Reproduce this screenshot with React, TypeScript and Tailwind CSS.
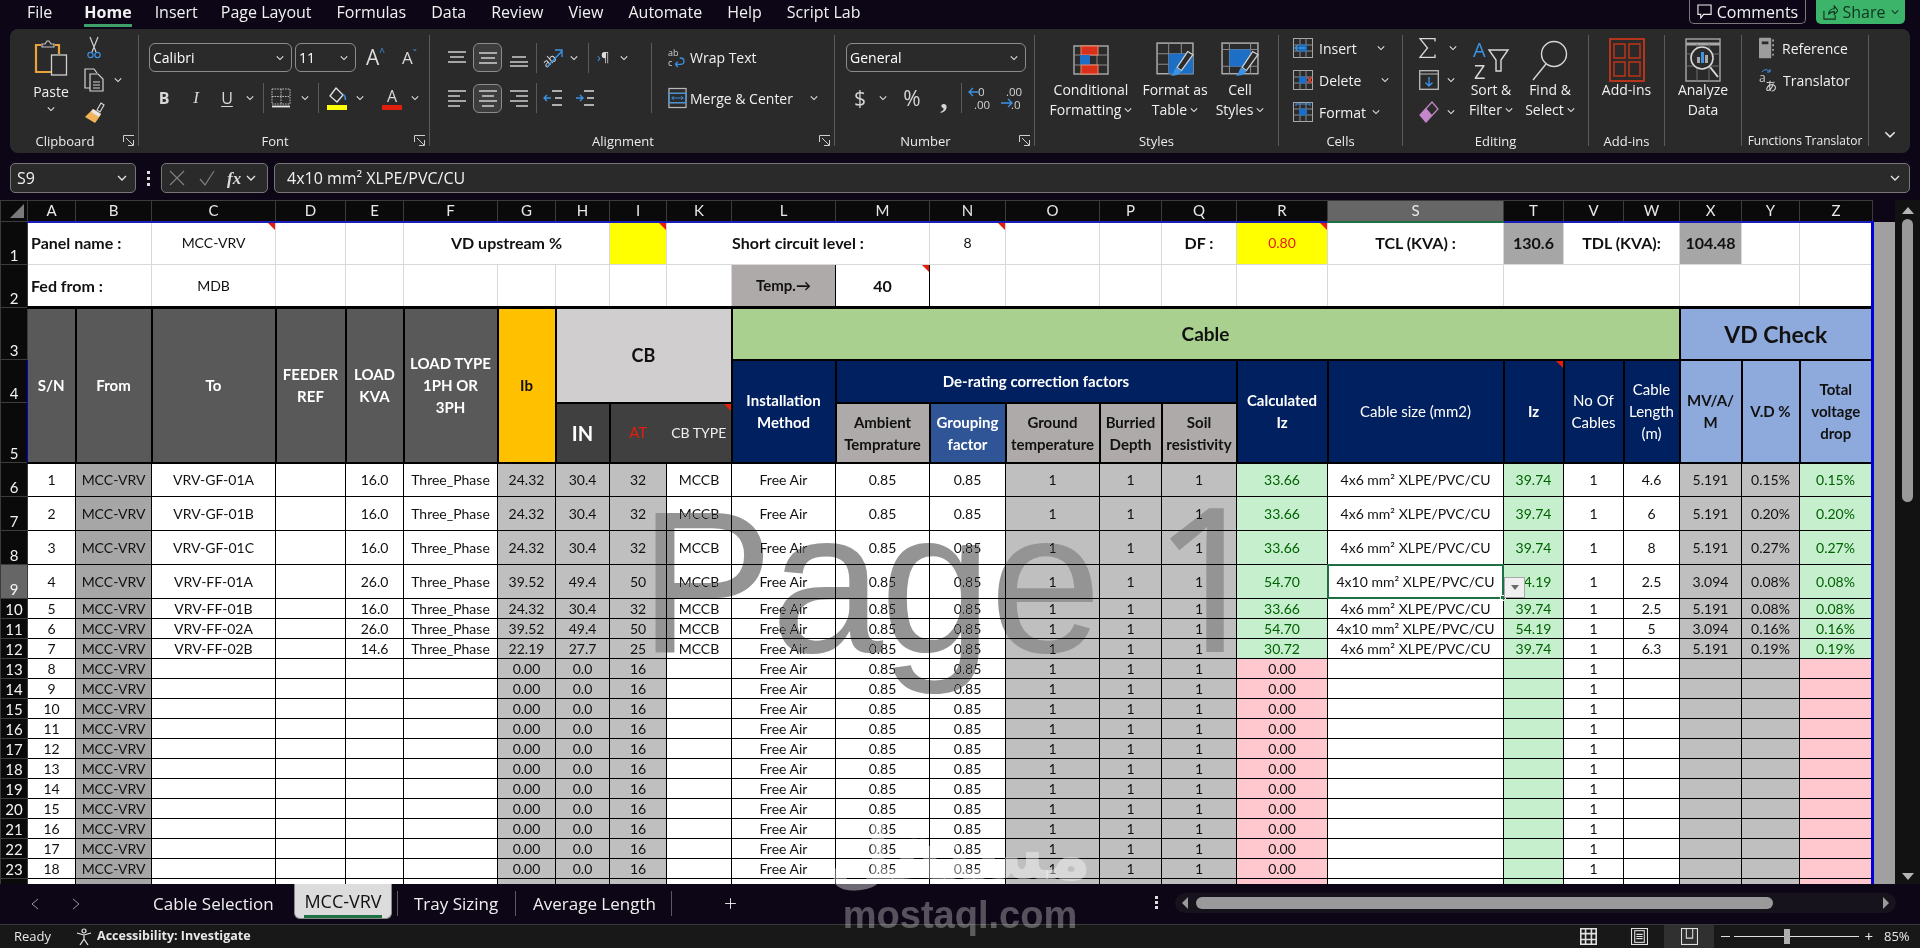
import type { ReactNode } from "react";
import { Plus } from "lucide-react";

const GRID = "font-['Lato','Liberation_Sans',sans-serif]";

const Chev = ({ className = "" }: { className?: string }) => (
  <svg viewBox="0 0 10 6" className={`h-[6px] w-[10px] shrink-0 ${className}`} fill="none" stroke="#e6e6e6" strokeWidth="1.3">
    <path d="M1 1l4 4 4-4" />
  </svg>
);

const Sep = ({ className = "" }: { className?: string }) => <span className={`h-[30px] w-px shrink-0 bg-[#5a5a5a] ${className}`} />;

const Launcher = () => (
  <svg viewBox="0 0 12 12" className="absolute bottom-[-1px] right-[3px] h-[12px] w-[12px]" fill="none" stroke="#cfcfcf">
    <path d="M.5 7V.5H11M3 3l7 7M5 10.5h5.5V5" />
  </svg>
);

function Group({ className, label, labelClass = "text-[13px]", launcher, children }: { className: string; label: string; labelClass?: string; launcher?: boolean; children: ReactNode }) {
  return (
    <div className={`relative flex h-[111px] shrink-0 flex-col border-r border-[#5a5a5a] ${className}`}>
      <div className="h-[95px] shrink-0">{children}</div>
      <div className={`h-[22px] shrink-0 whitespace-nowrap text-center leading-[22px] text-[#ececec] ${labelClass} ${launcher ? "pr-[18px]" : ""}`}>{label}</div>
      {launcher && <Launcher />}
    </div>
  );
}

function Select({ className, text }: { className: string; text: string }) {
  return (
    <div className={`flex h-[29px] shrink-0 items-center justify-between rounded-[6px] border border-[#8c8c8c] pl-[3px] pr-[7px] ${className}`}>
      <span className="text-[14px] text-white">{text}</span>
      <Chev className="!w-[8px]" />
    </div>
  );
}

const Lines = ({ rows, active = false }: { rows: [number, number, number][]; active?: boolean }) => (
  <span className={`flex h-[29px] w-[29px] items-center justify-center rounded-[6px] ${active ? "border border-[#8c8c8c] bg-[#3d3d3d]" : ""}`}>
    <svg viewBox="0 0 20 20" className="h-[20px] w-[20px]" stroke="#dcdcdc" strokeWidth="1.4">
      {rows.map(([a, b, y]) => (
        <path key={y} d={`M${a} ${y}H${b}`} />
      ))}
    </svg>
  </span>
);

const Big = ({ icon, lines, className }: { icon: ReactNode; lines: ReactNode[]; className: string }) => (
  <div className={`flex shrink-0 flex-col items-center pt-[4px] text-[14px] leading-[20px] text-[#f0f0f0] ${className}`}>
    <div className="flex h-[41px] items-center">{icon}</div>
    {lines.map((l, i) => (
      <div key={i} className="flex items-center gap-[3px] whitespace-nowrap">
        {l}
      </div>
    ))}
  </div>
);

const PasteIcon = () => (
  <svg viewBox="0 0 34 36" className="h-[36px] w-[34px]" fill="none">
    <path d="M7 5H2v27h15" stroke="#e8a33d" strokeWidth="2.2" />
    <path d="M21 5h4v9" stroke="#e8a33d" strokeWidth="2.2" />
    <path d="M8 7V4h3l2-3h2l2 3h3v3z" stroke="#c4c4c4" strokeWidth="1.2" />
    <rect x="17.5" y="15" width="15" height="20" fill="#2b2b2b" stroke="#d0d0d0" strokeWidth="1.3" />
  </svg>
);

const Scissor = () => (
  <svg viewBox="0 0 16 24" className="h-[24px] w-[16px]" fill="none" strokeWidth="1.2">
    <path d="M4 1l6 15M12 1L6 16" stroke="#d0d0d0" />
    <circle cx="4.5" cy="19" r="2.6" stroke="#3c92e4" />
    <circle cx="11.5" cy="19" r="2.6" stroke="#3c92e4" />
  </svg>
);

const CopyIcon = () => (
  <svg viewBox="0 0 20 24" className="h-[24px] w-[20px]" fill="none" stroke="#d4d4d4" strokeWidth="1.2">
    <path d="M6 20H1V1h9l3 4" />
    <path d="M6 6h8l5 5v12H6z" fill="#2b2b2b" />
    <path d="M9 14h7M9 17h7M9 20h7" />
  </svg>
);

const Painter = () => (
  <svg viewBox="0 0 22 24" className="h-[24px] w-[22px]" fill="none">
    <path d="M14 10l4-7 3 2-4 7z" stroke="#d4d4d4" strokeWidth="1.2" />
    <path d="M10 9l8 5-3 5-3 4-10-6 3-3z" fill="#f0b35a" />
    <path d="M10 9l8 5-2 3-8-5z" fill="#e6e6e6" />
  </svg>
);

const BordersIcon = () => (
  <svg viewBox="0 0 20 20" className="h-[22px] w-[20px]" fill="none" stroke="#bdbdbd" strokeDasharray="1.6 1">
    <path d="M1 1h18v15H1zM10 1v15M1 8.5h18" />
    <path d="M1 18.5h18" stroke="#e6e6e6" strokeWidth="1.8" strokeDasharray="none" />
  </svg>
);

const FillIcon = () => (
  <span className="flex flex-col items-center">
    <svg viewBox="0 0 20 18" className="h-[18px] w-[20px]" fill="none">
      <path d="M9 1l7 7-6 7-7-6z" stroke="#e4e4e4" strokeWidth="1.3" />
      <path d="M16 7c2 2 3 4 2 6" stroke="#3c92e4" strokeWidth="1.6" />
    </svg>
    <span className="h-[5px] w-[20px] bg-[#ffff00]" />
  </span>
);

const OrientIcon = () => (
  <svg viewBox="0 0 22 24" className="h-[24px] w-[22px]" fill="none">
    <text x="-2" y="17" fontSize="12" fill="#dcdcdc" fontFamily="Open Sans" transform="rotate(-40 8 12)">ab</text>
    <path d="M4 21L19 5M12 4h7v7" stroke="#3c92e4" strokeWidth="1.4" />
  </svg>
);

const IndentIcon = ({ flip = false }: { flip?: boolean }) => (
  <svg viewBox="0 0 20 18" className="h-[18px] w-[20px]" fill="none" strokeWidth="1.4">
    <path d="M9 2h10M9 16h10M12 9h7" stroke="#dcdcdc" />
    {flip ? <path d="M1 9h7M5 6l3 3-3 3" stroke="#3c92e4" /> : <path d="M8 9H1M4 6L1 9l3 3" stroke="#3c92e4" />}
  </svg>
);

const WrapIcon = () => (
  <svg viewBox="0 0 20 24" className="h-[24px] w-[18px]" fill="none">
    <text x="0" y="10" fontSize="10" fill="#cfcfcf" fontFamily="Open Sans">ab</text>
    <text x="0" y="21" fontSize="10" fill="#cfcfcf" fontFamily="Open Sans">c</text>
    <path d="M8 19h6c5 0 5-7 0-7h-1M8 19l3-3M8 19l3 3" stroke="#3c92e4" strokeWidth="1.4" />
  </svg>
);

const MergeIcon = () => (
  <svg viewBox="0 0 20 22" className="h-[22px] w-[19px]" fill="none">
    <rect x="1" y="1" width="18" height="20" fill="#2b2b2b" stroke="#b8b8b8" strokeWidth="1.3" />
    <path d="M1 6h18M1 16h18" stroke="#b8b8b8" />
    <rect x="1.5" y="6" width="17" height="10" stroke="#3c92e4" strokeWidth="1.2" />
    <path d="M4 11h12M6 9l-2 2 2 2M14 9l2 2-2 2" stroke="#3c92e4" />
  </svg>
);

const Decimals = ({ top, bottom, right }: { top: string; bottom: string; right?: boolean }) => (
  <svg viewBox="0 0 24 26" className="h-[26px] w-[24px]" fill="none">
    <text x={right ? 6 : 10} y="11" fontSize="11.5" fill="#d4d4d4" fontFamily="Open Sans">{top}</text>
    <text x={right ? 11 : 6} y="24" fontSize="11.5" fill="#d4d4d4" fontFamily="Open Sans">{bottom}</text>
    {right ? <path d="M1 18h11M8 14l4 4-4 4" stroke="#3c92e4" strokeWidth="1.3" /> : <path d="M11 7H1M5 3L1 7l4 4" stroke="#3c92e4" strokeWidth="1.3" />}
  </svg>
);

const GridBase = ({ children }: { children: ReactNode }) => (
  <svg viewBox="0 0 36 30" className="h-[30px] w-[36px]" fill="none">
    <rect x="1" y="1" width="34" height="28" fill="#2b2b2b" stroke="#adadad" strokeWidth="1.4" />
    <path d="M1 10h34M1 20h34M12 1v28M24 1v28" stroke="#8a8a8a" />
    {children}
  </svg>
);

const CondIcon = () => (
  <GridBase>
    <rect x="8" y="1" width="17" height="9" fill="#d8311b" stroke="#f08a6a" />
    <rect x="7" y="10" width="10" height="10" fill="#1c6fc4" />
    <rect x="8" y="20" width="17" height="9" fill="#d8311b" stroke="#f08a6a" />
  </GridBase>
);

const Brush = () => (
  <g>
    <path d="M30 9l5 3-11 15-4-3z" fill="#2b2b2b" stroke="#d0d0d0" strokeWidth="1.2" />
    <path d="M19 24l5 3c-1 4-5 5-10 5 3-2 3-6 5-8z" fill="#3c92e4" />
  </g>
);

const TableIcon = () => (
  <svg viewBox="0 0 36 34" className="h-[36px] w-[38px]" fill="none">
    <rect x="1" y="1" width="34" height="29" fill="#2b2b2b" stroke="#adadad" strokeWidth="1.4" />
    <path d="M1 11h34M1 21h34M12 1v29M24 1v29" stroke="#8a8a8a" />
    <rect x="12" y="11" width="23" height="19" fill="#1c6fc4" />
    <Brush />
  </svg>
);

const CellStyleIcon = () => (
  <svg viewBox="0 0 36 34" className="h-[36px] w-[38px]" fill="none">
    <rect x="1" y="1" width="34" height="29" fill="#2b2b2b" stroke="#adadad" strokeWidth="1.4" />
    <path d="M1 7h34M1 23h34M8 1v29M28 1v29" stroke="#8a8a8a" />
    <rect x="8" y="7" width="20" height="16" fill="#1c6fc4" />
    <Brush />
  </svg>
);

const CellIcon = ({ kind }: { kind: "insert" | "delete" | "format" }) => (
  <svg viewBox="0 0 20 20" className="h-[20px] w-[20px]" fill="none">
    <rect x=".5" y=".5" width="19" height="19" stroke="#a8a8a8" />
    <path d="M.5 7h19M.5 13h19M7 .5v19M13 .5v19" stroke="#8a8a8a" />
    <rect x="6" y="6.5" width="8" height="7" fill="#1c6fc4" />
    {kind === "insert" && <path d="M12 10H2M5 7l-3 3 3 3" stroke="#3c92e4" strokeWidth="1.3" />}
    {kind === "delete" && <path d="M14 7l5 6M19 7l-5 6" stroke="#e8452c" strokeWidth="1.4" />}
    {kind === "format" && <path d="M3 2h14M3 0v4M17 0v4" stroke="#3c92e4" />}
  </svg>
);

const SortIcon = () => (
  <svg viewBox="0 0 38 42" className="h-[42px] w-[38px]" fill="none">
    <text x="1" y="18" fontSize="20" fill="#3c92e4" fontFamily="Open Sans">A</text>
    <text x="2" y="40" fontSize="20" fill="#d8d8d8" fontFamily="Open Sans">Z</text>
    <path d="M17 11h19l-7 10v11h-5V21z" stroke="#d8d8d8" strokeWidth="1.4" />
  </svg>
);

const FindIcon = () => (
  <svg viewBox="0 0 38 42" className="h-[42px] w-[38px]" fill="none" stroke="#d8d8d8" strokeWidth="1.4">
    <circle cx="23" cy="15" r="12.5" />
    <path d="M15 25L2 41" />
  </svg>
);

const AddinIcon = () => (
  <svg viewBox="0 0 36 44" className="h-[44px] w-[36px]" fill="none" stroke="#b5341a" strokeWidth="1.6">
    <rect x="1" y="1" width="34" height="42" strokeWidth="2" />
    <rect x="5" y="6" width="11" height="14" />
    <rect x="20" y="6" width="11" height="14" />
    <rect x="5" y="24" width="11" height="14" />
    <rect x="20" y="24" width="11" height="14" />
  </svg>
);

const AnalyzeIcon = () => (
  <svg viewBox="0 0 36 44" className="h-[44px] w-[36px]" fill="none">
    <rect x="1" y="1" width="34" height="42" stroke="#a8a8a8" strokeWidth="1.4" />
    <path d="M1 6h34" stroke="#a8a8a8" strokeWidth="3" />
    <path d="M1 16h34M1 28h34M12 6v37M24 6v37" stroke="#6d6d6d" />
    <circle cx="17" cy="20" r="11" fill="#2b2b2b" stroke="#d8d8d8" strokeWidth="1.6" />
    <path d="M25 29l8 10" stroke="#d8d8d8" strokeWidth="2" />
    <rect x="12" y="19" width="3" height="6" fill="#a8a8a8" />
    <rect x="16" y="14" width="3" height="11" fill="#3c92e4" />
    <rect x="20" y="17" width="3" height="8" fill="#a8a8a8" />
  </svg>
);

const SigmaIcon = () => (
  <svg viewBox="0 0 18 22" className="h-[22px] w-[17px]" fill="none" stroke="#d8d8d8" strokeWidth="1.4">
    <path d="M17 4V1H1l8 10-8 10h16v-3" />
  </svg>
);

const FillDown = () => (
  <svg viewBox="0 0 20 20" className="h-[20px] w-[20px]" fill="none">
    <rect x=".7" y=".7" width="18.6" height="18.6" stroke="#bdbdbd" strokeWidth="1.3" />
    <path d="M.7 4h18.6" stroke="#bdbdbd" />
    <path d="M10 7v9M6.500 12.500L10 16l3.500-3.500" stroke="#3c92e4" strokeWidth="1.4" />
  </svg>
);

const Eraser = () => (
  <svg viewBox="0 0 20 22" className="h-[22px] w-[20px]" fill="none">
    <path d="M13 1l6 7-12 13-6-7z" fill="#2b2b2b" stroke="#c487c9" strokeWidth="1.2" />
    <path d="M7 7l6 7-6 7-6-7z" fill="#c487c9" />
  </svg>
);

const BookIcon = () => (
  <svg viewBox="0 0 16 22" className="h-[22px] w-[15px]" fill="#9d9d9d">
    <rect x="0" y="0" width="13" height="22" rx="1" />
    <rect x="3" y="4" width="7" height="3" fill="#2b2b2b" />
    <path d="M14 2h2v2h-2zM14 7h2v2h-2zM14 12h2v2h-2zM14 17h2v2h-2z" />
  </svg>
);

const TranslateIcon = () => (
  <svg viewBox="0 0 20 24" className="h-[24px] w-[20px]" fill="none">
    <text x="0" y="14" fontSize="12" fill="#cfcfcf" fontFamily="Open Sans">a</text>
    <text x="6" y="23" fontSize="12" fill="#e2e2e2" fontFamily="'Noto Sans CJK JP'">あ</text>
    <path d="M3 4c2-3 6-3 8 0M11 1v3H8" stroke="#3c92e4" />
  </svg>
);

const Tri = () => <span className="absolute right-0 top-0 h-0 w-0 border-l-[7px] border-t-[7px] border-l-transparent border-t-[#e81c0c]" />;

const cell = "relative overflow-hidden whitespace-nowrap border border-black p-0 text-center align-middle";
const thin = `${cell} text-[14px] leading-none text-[#111]`;
const grid = "relative whitespace-nowrap border border-[#d9d9d9] p-0 text-center align-middle text-[14px] leading-none text-[#111]";
const head = `${cell} text-[15px] font-bold leading-[22px]`;
const RIGHT = "!border-r-[3px] !border-r-[#0000d8]";
const LEFT = "!border-l !border-l-[#0000d8]";
const TOP = "!border-t-2 !border-t-[#1c1cb8]";

const columns = ["A", "B", "C", "D", "E", "F", "G", "H", "I", "K", "L", "M", "N", "O", "P", "Q", "R", "S", "T", "V", "W", "X", "Y", "Z"];
const widths = [48, 76, 124, 70, 58, 94, 58, 54, 57, 65, 104, 94, 76, 94, 62, 75, 91, 176, 60, 60, 56, 62, 58, 73];

const filled: [string, string, string, string, string, string, string, string, string, string, string, string][] = [
  ["1", "VRV-GF-01A", "16.0", "24.32", "30.4", "32", "33.66", "4x6 mm² XLPE/PVC/CU", "39.74", "4.6", "5.191", "0.15%"],
  ["2", "VRV-GF-01B", "16.0", "24.32", "30.4", "32", "33.66", "4x6 mm² XLPE/PVC/CU", "39.74", "6", "5.191", "0.20%"],
  ["3", "VRV-GF-01C", "16.0", "24.32", "30.4", "32", "33.66", "4x6 mm² XLPE/PVC/CU", "39.74", "8", "5.191", "0.27%"],
  ["4", "VRV-FF-01A", "26.0", "39.52", "49.4", "50", "54.70", "4x10 mm² XLPE/PVC/CU", "54.19", "2.5", "3.094", "0.08%"],
  ["5", "VRV-FF-01B", "16.0", "24.32", "30.4", "32", "33.66", "4x6 mm² XLPE/PVC/CU", "39.74", "2.5", "5.191", "0.08%"],
  ["6", "VRV-FF-02A", "26.0", "39.52", "49.4", "50", "54.70", "4x10 mm² XLPE/PVC/CU", "54.19", "5", "3.094", "0.16%"],
  ["7", "VRV-FF-02B", "14.6", "22.19", "27.7", "25", "30.72", "4x6 mm² XLPE/PVC/CU", "39.74", "6.3", "5.191", "0.19%"],
];

const rowHeader = "border border-[#3c3c3c] bg-[#0a0a0a] p-0 text-center text-[15px] leading-[18px] text-[#f2f2f2]";

function DataRow({ n, index }: { n: number; index: number }) {
  const d = filled[index];
  const gray = "bg-[#bfbfbf]";
  const ok = "bg-[#c6efce] text-[#006100]";
  const bad = "bg-[#ffc7ce] text-[#9c0006]";
  const tall = n <= 9;
  return (
    <tr className={tall ? "h-[34px]" : "h-[20px]"}>
      <td className={`${rowHeader} ${tall ? "align-bottom" : "align-middle"} ${n === 9 ? "!bg-[#666666]" : ""}`}>{n}</td>
      <td className={`${thin} ${LEFT} bg-white`}>{d ? d[0] : index + 1}</td>
      <td className={`${thin} bg-[#a6a6a6]`}>MCC-VRV</td>
      <td className={`${thin} bg-white`}>{d?.[1]}</td>
      <td className={`${thin} bg-white`} />
      <td className={`${thin} bg-white`}>{d?.[2]}</td>
      <td className={`${thin} bg-white`}>{d ? "Three_Phase" : ""}</td>
      <td className={`${thin} ${gray}`}>{d ? d[3] : "0.00"}</td>
      <td className={`${thin} ${gray}`}>{d ? d[4] : "0.0"}</td>
      <td className={`${thin} ${gray}`}>{d ? d[5] : "16"}</td>
      <td className={`${thin} bg-white`}>{d ? "MCCB" : ""}</td>
      <td className={`${thin} bg-white`}>Free Air</td>
      <td className={`${thin} bg-white`}>0.85</td>
      <td className={`${thin} bg-white`}>0.85</td>
      <td className={`${thin} ${gray}`}>1</td>
      <td className={`${thin} ${gray}`}>1</td>
      <td className={`${thin} ${gray}`}>1</td>
      <td className={`${thin} ${d ? ok : bad}`}>{d ? d[6] : "0.00"}</td>
      {n === 9 ? (
        <td className={`${thin} !overflow-visible bg-white`}>
          {d?.[7]}
          <span className="absolute inset-[-1px] border-2 border-[#1f6f45]" />
          <span className="absolute bottom-[-3px] right-[-3px] h-[6px] w-[6px] border border-white bg-[#1f6f45]" />
          <span className="absolute right-[-22px] top-[12px] z-10 flex h-[21px] w-[21px] items-center justify-center border border-[#a8a8a8] bg-[#f0f0f0]">
            <span className="h-0 w-0 border-x-[4px] border-t-[5px] border-x-transparent border-t-[#6a6a6a]" />
          </span>
        </td>
      ) : (
        <td className={`${thin} bg-white`}>{d?.[7]}</td>
      )}
      <td className={`${thin} ${ok}`}>{d?.[8]}</td>
      <td className={`${thin} bg-white`}>1</td>
      <td className={`${thin} bg-white`}>{d?.[9]}</td>
      <td className={`${thin} ${gray}`}>{d?.[10]}</td>
      <td className={`${thin} ${gray}`}>{d?.[11]}</td>
      <td className={`${thin} ${RIGHT} ${d ? ok : bad}`}>{d?.[11]}</td>
    </tr>
  );
}

function Sheet() {
  const bold = "!text-[16px] font-bold";
  return (
    <table className={`${GRID} table-fixed border-collapse`}>
      <colgroup>
        <col className="w-[27px]" />
        {widths.map((w, i) => (
          <col key={i} style={{ width: w }} />
        ))}
      </colgroup>
      <tbody>
        <tr className="h-[21px]">
          <td className="relative border border-[#3c3c3c] bg-[#0a0a0a] p-0">
            <span className="absolute bottom-[3px] right-[3px] h-0 w-0 border-b-[14px] border-l-[14px] border-b-[#7a7a7a] border-l-transparent" />
          </td>
          {columns.map((c) => (
            <td key={c} className={`border border-[#3c3c3c] p-0 text-center text-[15px] leading-none text-[#e8e8e8] ${c === "S" ? "border-b-2 border-b-[#1f6f45] bg-[#666666]" : "bg-[#0a0a0a]"}`}>
              {c}
            </td>
          ))}
        </tr>

        <tr className="h-[43px]">
          <td className={`${rowHeader} align-bottom`}>1</td>
          <td colSpan={2} className={`${grid} ${TOP} ${LEFT} bg-white pl-[3px] !text-left ${bold}`}>Panel name :</td>
          <td className={`${grid} ${TOP} bg-white`}>MCC-VRV<Tri /></td>
          <td className={`${grid} ${TOP} bg-white`} />
          <td className={`${grid} ${TOP} bg-white`} />
          <td colSpan={3} className={`${grid} ${TOP} bg-white ${bold}`}>VD upstream %</td>
          <td className={`${grid} ${TOP} bg-[#ffff00]`}><Tri /></td>
          <td className={`${grid} ${TOP} border-r-white bg-white`} />
          <td colSpan={2} className={`${grid} ${TOP} bg-white !text-left ${bold}`}>Short circuit level :</td>
          <td className={`${grid} ${TOP} bg-white`}>8<Tri /></td>
          <td className={`${grid} ${TOP} bg-white`} />
          <td className={`${grid} ${TOP} bg-white`} />
          <td className={`${grid} ${TOP} bg-white ${bold}`}>DF :</td>
          <td className={`${grid} ${TOP} bg-[#ffff00] !text-[#e81c0c]`}>0.80<Tri /></td>
          <td className={`${grid} ${TOP} !border-t-[#1f6f45] bg-white ${bold}`}>TCL (KVA) :</td>
          <td className={`${grid} ${TOP} bg-[#a6a6a6] ${bold}`}>130.6</td>
          <td colSpan={2} className={`${grid} ${TOP} bg-white ${bold}`}>TDL (KVA):</td>
          <td className={`${grid} ${TOP} bg-[#a6a6a6] ${bold}`}>104.48</td>
          <td className={`${grid} ${TOP} bg-white`} />
          <td className={`${grid} ${TOP} ${RIGHT} bg-white`} />
        </tr>

        <tr className="h-[43px]">
          <td className={`${rowHeader} align-bottom`}>2</td>
          <td colSpan={2} className={`${grid} ${LEFT} bg-white pl-[3px] !text-left ${bold}`}>Fed from :</td>
          <td className={`${grid} bg-white`}>MDB</td>
          {[0, 1, 2, 3, 4, 5, 6].map((i) => (
            <td key={i} className={`${grid} bg-white`} />
          ))}
          <td className={`${cell} bg-[#aeaaaa] text-[15px] font-bold text-[#111]`}>Temp.→</td>
          <td className={`${cell} bg-white text-[16px] font-bold text-[#111]`}>40<Tri /></td>
          {[0, 1, 2, 3, 4, 5].map((i) => (
            <td key={i} className={`${grid} bg-white`} />
          ))}
          <td colSpan={3} className={`${grid} bg-white`} />
          <td colSpan={2} className={`${grid} bg-white`} />
          <td className={`${grid} ${RIGHT} bg-white`} />
        </tr>

        <tr className="h-[52px] [&>td]:border-t-[3px] [&>td:first-child]:border-t">
          <td className={`${rowHeader} align-bottom`}>3</td>
          <td rowSpan={3} className={`${head} ${LEFT} border-2 bg-[#595959] text-white`}>S/N</td>
          <td rowSpan={3} className={`${head} border-2 bg-[#595959] text-white`}>From</td>
          <td rowSpan={3} className={`${head} border-2 bg-[#595959] text-white`}>To</td>
          <td rowSpan={3} className={`${head} whitespace-normal border-2 bg-[#595959] text-white`}>FEEDER<br />REF</td>
          <td rowSpan={3} className={`${head} border-2 bg-[#595959] text-white`}>LOAD<br />KVA</td>
          <td rowSpan={3} className={`${head} border-2 bg-[#595959] text-white`}>LOAD TYPE<br />1PH OR<br />3PH</td>
          <td rowSpan={3} className={`${head} border-2 bg-[#ffc000] text-[#111]`}>Ib</td>
          <td rowSpan={2} colSpan={3} className={`${head} border-2 bg-[#d0cece] !text-[18px] text-[#111]`}>CB</td>
          <td colSpan={11} className={`${head} border-2 bg-[#a9d08e] !text-[19px] text-[#111]`}>Cable</td>
          <td colSpan={3} className={`${head} ${RIGHT} border-2 bg-[#8ea9db] !text-[23px] text-[#111]`}>VD Check</td>
        </tr>

        <tr className="h-[43px]">
          <td className={`${rowHeader} align-bottom`}>4</td>
          <td rowSpan={2} className={`${head} border-2 bg-[#002060] text-white`}>Installation<br />Method</td>
          <td colSpan={5} className={`${head} border-2 bg-[#002060] text-white`}>De-rating correction factors</td>
          <td rowSpan={2} className={`${head} border-2 bg-[#002060] text-white`}>Calculated<br />Iz</td>
          <td rowSpan={2} className={`${cell} border-2 bg-[#002060] text-[15px] text-white`}>Cable size (mm2)</td>
          <td rowSpan={2} className={`${head} border-2 bg-[#002060] text-white`}>Iz<Tri /></td>
          <td rowSpan={2} className={`${cell} border-2 bg-[#002060] text-[15px] leading-[22px] text-white`}>No Of<br />Cables</td>
          <td rowSpan={2} className={`${cell} border-2 bg-[#002060] text-[15px] leading-[22px] text-white`}>Cable<br />Length<br />(m)</td>
          <td rowSpan={2} className={`${head} border-2 bg-[#8ea9db] text-[#111]`}>MV/A/<br />M</td>
          <td rowSpan={2} className={`${head} border-2 bg-[#8ea9db] text-[#111]`}>V.D %</td>
          <td rowSpan={2} className={`${head} ${RIGHT} border-2 bg-[#8ea9db] text-[#111]`}>Total<br />voltage<br />drop</td>
        </tr>

        <tr className="h-[60px]">
          <td className={`${rowHeader} align-bottom`}>5</td>
          <td className={`${head} border-2 bg-[#404040] !text-[20px] text-white`}>IN</td>
          <td className={`${cell} border-y-2 border-l-2 border-r-[#404040] bg-[#404040] text-[15px] text-[#e81c0c]`}>AT</td>
          <td className={`${cell} border-y-2 border-r-2 border-l-[#404040] bg-[#404040] text-[14px] text-[#efefef]`}>CB TYPE<Tri /></td>
          <td className={`${head} border-2 bg-[#aeaaaa] text-[#111]`}>Ambient<br />Temprature</td>
          <td className={`${head} border-2 bg-[#2f5597] text-white`}>Grouping<br />factor</td>
          <td className={`${head} border-2 bg-[#aeaaaa] text-[#111]`}>Ground<br />temperature</td>
          <td className={`${head} border-2 bg-[#aeaaaa] text-[#111]`}>Burried<br />Depth</td>
          <td className={`${head} border-2 bg-[#aeaaaa] text-[#111]`}>Soil<br />resistivity</td>
        </tr>

        {Array.from({ length: 19 }, (_, i) => (
          <DataRow key={i} n={i + 6} index={i} />
        ))}
      </tbody>
    </table>
  );
}

const Menu = () => (
  <div className="flex h-[29px] shrink-0 items-start justify-between pl-[27px] pr-[15px] text-[16px] text-[#f2f2f2]">
    <nav className="flex gap-[25px] pt-[1px] leading-[22px]">
      <span>File</span>
      <span className="ml-[7px] mr-[-2px] h-[26px] border-b-[3px] border-[#3f9f68] font-bold">Home</span>
      <span className="mr-[-2px]">Insert</span>
      {["Page Layout", "Formulas", "Data", "Review", "View", "Automate", "Help", "Script Lab"].map((t) => (
        <span key={t}>{t}</span>
      ))}
    </nav>
    <div className="flex gap-[10px]">
      <div className="flex h-[24px] w-[117px] items-center justify-center gap-[5px] rounded-b-[5px] border border-t-0 border-[#7a7a7a]">
        <svg viewBox="0 0 16 16" className="h-[15px] w-[15px]" fill="none" stroke="#eee" strokeWidth="1.2"><path d="M1 1h14v10H7l-3 4v-4H1z" /></svg>
        Comments
      </div>
      <div className="flex h-[24px] w-[89px] items-center justify-center gap-[5px] rounded-b-[5px] bg-[#3cb56b] text-[#10331f]">
        <svg viewBox="0 0 16 16" className="h-[15px] w-[15px]" fill="none" stroke="#10331f" strokeWidth="1.2"><path d="M1 6v9h12v-4M6 10c0-4 3-6 6-6V1l4 5-4 4V7c-3 0-5 1-6 3z" /></svg>
        Share
        <Chev className="!w-[8px] [&>path]:stroke-[#10331f]" />
      </div>
    </div>
  </div>
);

const Ribbon = () => (
  <div className="mx-[10px] flex h-[124px] shrink-0 rounded-[8px] bg-[#2a2a2a] pt-[6px] text-[14px] text-[#f0f0f0]">
    <Group className="w-[129px]" label="Clipboard" launcher>
      <div className="flex">
        <div className="ml-[21px] flex w-[40px] flex-col items-center pt-[5px]">
          <PasteIcon />
          <span className="mt-[6px] leading-[20px]">Paste</span>
          <Chev className="mt-[4px] !w-[8px]" />
        </div>
        <div className="ml-[10px] flex w-[50px] flex-col gap-[6px]">
          <div className="flex h-[26px] w-[26px] items-center justify-center"><Scissor /></div>
          <div className="flex h-[26px] items-center"><span className="flex w-[26px] justify-center"><CopyIcon /></span><Chev className="ml-[7px] !w-[8px]" /></div>
          <div className="flex h-[26px] w-[26px] items-center justify-center"><Painter /></div>
        </div>
      </div>
    </Group>

    <Group className="w-[291px]" label="Font" launcher>
      <div className="flex items-center gap-[3px] pl-[10px] pt-[8px]">
        <Select className="w-[143px]" text="Calibri" />
        <Select className="w-[61px]" text="11" />
        <span className="ml-[7px] flex w-[24px] items-start text-[21px] leading-none text-[#dcdcdc]">A<span className="text-[10px] leading-[10px] text-[#3c92e4]">^</span></span>
        <span className="ml-[9px] flex w-[22px] items-start text-[17px] leading-none text-[#dcdcdc]">A<span className="text-[10px] leading-[10px] text-[#3c92e4]">ˇ</span></span>
      </div>
      <div className="mt-[11px] flex h-[30px] items-center pl-[14px] text-[#d8d8d8]">
        <span className="w-[22px] text-center text-[16px] font-bold">B</span>
        <span className="ml-[10px] w-[22px] text-center font-['Liberation_Serif',serif] text-[17px] italic">I</span>
        <span className="ml-[9px] w-[22px] text-center text-[16px] underline underline-offset-2">U</span>
        <Chev className="ml-[8px] !w-[8px]" />
        <Sep className="ml-[9px]" />
        <span className="ml-[7px]"><BordersIcon /></span>
        <Chev className="ml-[10px] !w-[8px]" />
        <Sep className="ml-[9px]" />
        <span className="ml-[8px]"><FillIcon /></span>
        <Chev className="ml-[9px] !w-[8px]" />
        <span className="ml-[18px] flex w-[20px] flex-col items-center text-[16px] leading-[18px]">A<span className="h-[5px] w-[20px] bg-[#e0200c]" /></span>
        <Chev className="ml-[9px] !w-[8px]" />
      </div>
    </Group>

    <Group className="w-[405px]" label="Alignment" launcher>
      <div className="flex pt-[8px]">
        <div className="flex w-[222px] shrink-0 flex-col gap-[11px] border-r border-[#5a5a5a] pl-[12px]">
          <div className="flex h-[29px] items-center">
            <Lines rows={[[1, 19, 4], [3, 17, 9], [1, 19, 14]]} />
            <span className="ml-[2px]"><Lines active rows={[[1, 19, 5], [3, 17, 10], [1, 19, 15]]} /></span>
            <span className="ml-[2px]"><Lines rows={[[3, 17, 9], [1, 19, 14], [1, 19, 18]]} /></span>
            <Sep className="ml-[3px]" />
            <span className="ml-[6px]"><OrientIcon /></span>
            <Chev className="ml-[5px] !w-[8px]" />
            <Sep className="ml-[10px]" />
            <span className="ml-[8px] text-[13px] text-[#dcdcdc]"><span className="text-[#3c92e4]">›</span>¶</span>
            <Chev className="ml-[11px] !w-[8px]" />
          </div>
          <div className="flex h-[30px] items-center">
            <Lines rows={[[1, 19, 3], [1, 13, 8], [1, 19, 13], [1, 13, 18]]} />
            <span className="ml-[2px]"><Lines active rows={[[1, 19, 3], [4, 16, 8], [1, 19, 13], [4, 16, 18]]} /></span>
            <span className="ml-[2px]"><Lines rows={[[1, 19, 3], [7, 19, 8], [1, 19, 13], [7, 19, 18]]} /></span>
            <Sep className="ml-[3px]" />
            <span className="ml-[6px]"><IndentIcon /></span>
            <span className="ml-[12px]"><IndentIcon flip /></span>
          </div>
        </div>
        <div className="flex flex-col gap-[11px] pl-[16px]">
          <div className="flex h-[29px] items-center gap-[4px]"><WrapIcon /><span>Wrap Text</span></div>
          <div className="flex h-[30px] items-center gap-[3px]"><MergeIcon /><span>Merge &amp; Center</span><Chev className="ml-[14px] !w-[8px]" /></div>
        </div>
      </div>
    </Group>

    <Group className="w-[200px]" label="Number" launcher>
      <div className="pl-[11px] pt-[8px]"><Select className="w-[180px]" text="General" /></div>
      <div className="mt-[11px] flex h-[30px] items-center pl-[18px] text-[#d4d4d4]">
        <span className="w-[14px] text-center text-[21px] leading-none">$</span>
        <Chev className="ml-[12px] !w-[8px]" />
        <span className="ml-[13px] w-[24px] text-center text-[21px] leading-none">%</span>
        <span className="ml-[12px] w-[16px] text-center font-['Liberation_Serif',serif] text-[30px] font-bold leading-[30px]">,</span>
        <Sep className="ml-[9px]" />
        <span className="ml-[6px]"><Decimals top="0" bottom=".00" /></span>
        <span className="ml-[8px]"><Decimals top=".00" bottom=".0" right /></span>
      </div>
    </Group>

    <Group className="w-[244px]" label="Styles">
      <div className="flex pl-[12px]">
        <Big className="w-[88px]" icon={<CondIcon />} lines={["Conditional", <>Formatting<Chev className="!w-[8px]" /></>]} />
        <Big className="w-[80px]" icon={<TableIcon />} lines={["Format as", <>Table<Chev className="!w-[8px]" /></>]} />
        <Big className="w-[50px]" icon={<CellStyleIcon />} lines={["Cell", <>Styles<Chev className="!w-[8px]" /></>]} />
      </div>
    </Group>

    <Group className="w-[124px]" label="Cells">
      <div className="flex flex-col gap-[6px] pl-[14px]">
        <div className="flex h-[26px] items-center gap-[6px]"><CellIcon kind="insert" />Insert<Chev className="ml-[14px] !w-[8px]" /></div>
        <div className="flex h-[26px] items-center gap-[6px]"><CellIcon kind="delete" />Delete<Chev className="ml-[14px] !w-[8px]" /></div>
        <div className="flex h-[26px] items-center gap-[6px]"><CellIcon kind="format" />Format<Chev className="!w-[8px]" /></div>
      </div>
    </Group>

    <Group className="w-[186px]" label="Editing">
      <div className="flex">
        <div className="flex w-[58px] shrink-0 flex-col gap-[6px] pl-[16px]">
          <div className="flex h-[26px] items-center gap-[13px]"><SigmaIcon /><Chev className="!w-[8px]" /></div>
          <div className="flex h-[26px] items-center gap-[8px]"><FillDown /><Chev className="!w-[8px]" /></div>
          <div className="flex h-[26px] items-center gap-[8px]"><Eraser /><Chev className="!w-[8px]" /></div>
        </div>
        <Big className="w-[60px]" icon={<SortIcon />} lines={["Sort &", <>Filter<Chev className="!w-[8px]" /></>]} />
        <Big className="w-[58px]" icon={<FindIcon />} lines={["Find &", <>Select<Chev className="!w-[8px]" /></>]} />
      </div>
    </Group>

    <Group className="w-[76px]" label="Add-ins">
      <Big className="w-full" icon={<AddinIcon />} lines={["Add-ins"]} />
    </Group>

    <Group className="w-[77px]" label="">
      <Big className="w-full" icon={<AnalyzeIcon />} lines={["Analyze", "Data"]} />
    </Group>

    <Group className="w-[127px]" label="Functions Translator" labelClass="text-[12px]">
      <div className="flex flex-col gap-[6px] pl-[17px]">
        <div className="flex h-[26px] items-center gap-[8px]"><BookIcon />Reference</div>
        <div className="flex h-[26px] items-center gap-[4px]"><TranslateIcon />Translator</div>
      </div>
    </Group>

    <div className="flex flex-1 items-end justify-center pb-[15px]">
      <Chev className="!h-[7px] !w-[12px]" />
    </div>
  </div>
);

const FormulaBar = () => (
  <div className="mx-[10px] mt-[10px] flex h-[30px] shrink-0 items-center text-[#f0f0f0]">
    <div className="flex h-full w-[126px] items-center justify-between rounded-[5px] border border-[#777] bg-[#2a2a2a] pl-[6px] pr-[8px] text-[16px]">S9<Chev /></div>
    <div className="mx-[11px] flex flex-col gap-[3px]">
      <span className="h-[3px] w-[3px] bg-[#ddd]" />
      <span className="h-[3px] w-[3px] bg-[#ddd]" />
      <span className="h-[3px] w-[3px] bg-[#ddd]" />
    </div>
    <div className="flex h-full w-[107px] items-center rounded-[5px] border border-[#777] bg-[#2a2a2a] pl-[7px]">
      <svg viewBox="0 0 16 16" className="h-[16px] w-[16px]" fill="none" stroke="#7f7f7f" strokeWidth="1.2"><path d="M1 1l14 14M15 1L1 15" /></svg>
      <svg viewBox="0 0 16 16" className="ml-[14px] h-[16px] w-[16px]" fill="none" stroke="#7f7f7f" strokeWidth="1.2"><path d="M1 9l5 6L15 1" /></svg>
      <span className="ml-[12px] font-['Liberation_Serif',serif] text-[17px] font-bold italic leading-none text-[#dcdcdc]">fx</span>
      <Chev className="ml-[5px]" />
    </div>
    <div className="ml-[6px] flex h-full flex-1 items-center justify-between rounded-[5px] border border-[#777] bg-[#2a2a2a] pl-[12px] pr-[8px] text-[16px]">
      4x10 mm² XLPE/PVC/CU
      <Chev className="!w-[12px]" />
    </div>
  </div>
);

const Tabs = () => (
  <div className="flex h-[40px] shrink-0 items-start text-[17px] text-[#efefef]">
    <svg viewBox="0 0 8 12" className="ml-[31px] mt-[14px] h-[12px] w-[8px]" fill="none" stroke="#9a9a9a"><path d="M7 1L1 6l6 5" /></svg>
    <svg viewBox="0 0 8 12" className="ml-[33px] mt-[14px] h-[12px] w-[8px]" fill="none" stroke="#9a9a9a"><path d="M1 1l6 5-6 5" /></svg>
    <span className="ml-[73px] mt-[8px] w-[141px] leading-[24px]">Cable Selection</span>
    <div className="flex h-[35px] w-[98px] flex-col items-center rounded-b-[6px] border border-t-0 border-[#8a8a8a] bg-[#dcdcdc] pt-[6px] text-[18px] leading-[22px] text-[#111]">
      MCC-VRV
      <span className="mt-[3px] h-[3px] w-[78px] bg-[#1e7145]" />
    </div>
    <Sep className="ml-[5px] mt-[7px] !h-[25px]" />
    <span className="ml-[16px] mt-[8px] w-[84px] whitespace-nowrap leading-[24px]">Tray Sizing</span>
    <Sep className="ml-[17px] mt-[7px] !h-[25px]" />
    <span className="ml-[17px] mt-[8px] w-[122px] whitespace-nowrap leading-[24px]">Average Length</span>
    <Sep className="ml-[16px] mt-[7px] !h-[25px]" />
    <Plus className="ml-[50px] mt-[11px] h-[17px] w-[17px]" strokeWidth={1.3} />
    <div className="ml-[416px] mt-[12px] flex flex-col gap-[2px]">
      <span className="h-[3px] w-[3px] bg-[#ddd]" />
      <span className="h-[3px] w-[3px] bg-[#ddd]" />
      <span className="h-[3px] w-[3px] bg-[#ddd]" />
    </div>
    <div className="ml-[17px] mt-[9px] flex h-[20px] w-[721px] items-center rounded-full bg-[#17131c] px-[7px]">
      <span className="h-0 w-0 border-y-[6px] border-r-[6px] border-y-transparent border-r-[#9a9a9a]" />
      <span className="ml-[8px] h-[12px] w-[577px] rounded-full bg-[#9a9a9a]" />
      <span className="ml-auto h-0 w-0 border-y-[6px] border-l-[6px] border-y-transparent border-l-[#9a9a9a]" />
    </div>
  </div>
);

const StatusBar = () => (
  <div className="flex h-[24px] shrink-0 items-center border-t border-[#3a3a3a] bg-[#181818] pl-[14px] text-[13px] text-[#e8e8e8]">
    <span>Ready</span>
    <svg viewBox="0 0 18 18" className="ml-[24px] h-[18px] w-[18px]" fill="none" stroke="#e8e8e8" strokeWidth="1.2">
      <circle cx="9" cy="3" r="2" />
      <path d="M2 5l7 2 7-2M9 7v4l-4 6M9 11l4 6" />
    </svg>
    <span className="ml-[4px] text-[12.500px] font-bold">Accessibility: Investigate</span>
    <div className="ml-auto flex h-full items-center">
      <svg viewBox="0 0 16 16" className="h-[17px] w-[17px]" fill="#e0e0e0"><path d="M0 0h16v16H0zM1.500 1.500v3h3v-3zM6 1.500v3h4v-3zM11.500 1.500v3h3v-3zM1.500 6v4h3V6zM6 6v4h4V6zM11.500 6v4h3V6zM1.500 11.500v3h3v-3zM6 11.500v3h4v-3zM11.500 11.500v3h3v-3z" fillRule="evenodd" /></svg>
      <svg viewBox="0 0 16 16" className="ml-[34px] h-[17px] w-[17px]" fill="none" stroke="#e0e0e0"><rect x=".5" y=".5" width="15" height="15" /><rect x="3.500" y="2.500" width="9" height="11" /><path d="M5 6h6M5 8h6M5 10h6" /></svg>
      <div className="ml-[16px] flex h-full w-[50px] items-center justify-center bg-[#303030]">
        <svg viewBox="0 0 16 16" className="h-[17px] w-[17px]" fill="none" stroke="#e0e0e0"><rect x=".5" y=".5" width="15" height="15" /><path d="M5 .5v9h6V.5" /></svg>
      </div>
      <span className="ml-[7px] h-px w-[9px] bg-[#e0e0e0]" />
      <div className="relative ml-[4px] h-px w-[125px] bg-[#e0e0e0]">
        <span className="absolute left-[50px] top-[-7px] h-[15px] w-[6px] bg-[#b0b0b0]" />
      </div>
      <span className="ml-[5px] text-[15px] leading-none">+</span>
      <span className="ml-[11px] w-[36px] text-[13px]">85%</span>
    </div>
  </div>
);

export default function App() {
  return (
    <div className="relative flex h-[948px] w-[1920px] flex-col overflow-hidden bg-[#0d0616] font-['Open_Sans',sans-serif]">
      <Menu />
      <Ribbon />
      <FormulaBar />
      <div className="relative mt-[7px] flex h-[684px] shrink-0 overflow-hidden">
        <div className="w-[1874px] shrink-0 overflow-hidden">
          <Sheet />
        </div>
        <div className="mt-[22px] w-[21px] shrink-0 bg-[#a0a0a0]" />
        <div className="flex w-[25px] shrink-0 flex-col items-center bg-[#121212] pt-[7px]">
          <span className="h-0 w-0 border-x-[6px] border-b-[7px] border-x-transparent border-b-[#b5b5b5]" />
          <span className="mt-[5px] h-[283px] w-[11px] rounded-full bg-[#9a9a9a]" />
          <span className="mb-[4px] mt-auto h-0 w-0 border-x-[6px] border-t-[7px] border-x-transparent border-t-[#b5b5b5]" />
        </div>
        <span className="pointer-events-none absolute left-[639px] top-[273px] whitespace-nowrap font-['Liberation_Sans',sans-serif] text-[202px] leading-none tracking-[-3px] text-[#949494] mix-blend-darken">
          Page <span className="font-['Noto_Sans',sans-serif]">1</span>
        </span>
      </div>
      <Tabs />
      <StatusBar />
      <div className="pointer-events-none absolute left-[838px] top-[812px] flex w-[244px] flex-col items-center">
        <span dir="rtl" className="font-['DejaVu_Sans',sans-serif] text-[72px] font-bold leading-[84px] text-white/40">مستقل</span>
        <span className="font-['Liberation_Sans',sans-serif] text-[38px] font-bold leading-[38px] text-white/30">mostaql.com</span>
      </div>
    </div>
  );
}
